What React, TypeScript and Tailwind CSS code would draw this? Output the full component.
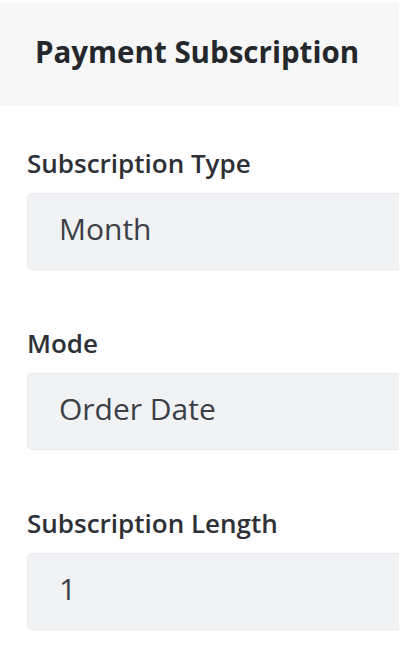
const fields = [
  { label: "Subscription Type", value: "Month" },
  { label: "Mode", value: "Order Date" },
  { label: "Subscription Length", value: "1" },
];

const App = () => {
  return (
    <div className="w-[414px] h-[650px] bg-white overflow-hidden font-['Open_Sans',sans-serif]">
      <div className="w-[399px] overflow-hidden pt-[3px]">
        <div className="h-[103px] bg-[#f7f7f7] pl-[35px] pt-[31px]">
          <h1 className="text-[29.5px] leading-[36px] font-bold text-[#24272c]">
            Payment Subscription
          </h1>
        </div>

        <div className="pl-[27px] pt-[39px] flex flex-col gap-[55px]">
          {fields.map((field) => (
            <div key={field.label}>
              <label className="block text-[26px] leading-[36px] font-semibold text-[#2d3036] mb-[12px]">
                {field.label}
              </label>
              <div className="-mr-3 h-[77px] flex items-center pb-[6px] pl-[31px] bg-[#f1f2f4] border border-[#e7e8eb] rounded-[5px] text-[30px] leading-[40px] text-[#3b4047]">
                {field.value}
              </div>
            </div>
          ))}
        </div>
      </div>
    </div>
  );
};

export default App;
